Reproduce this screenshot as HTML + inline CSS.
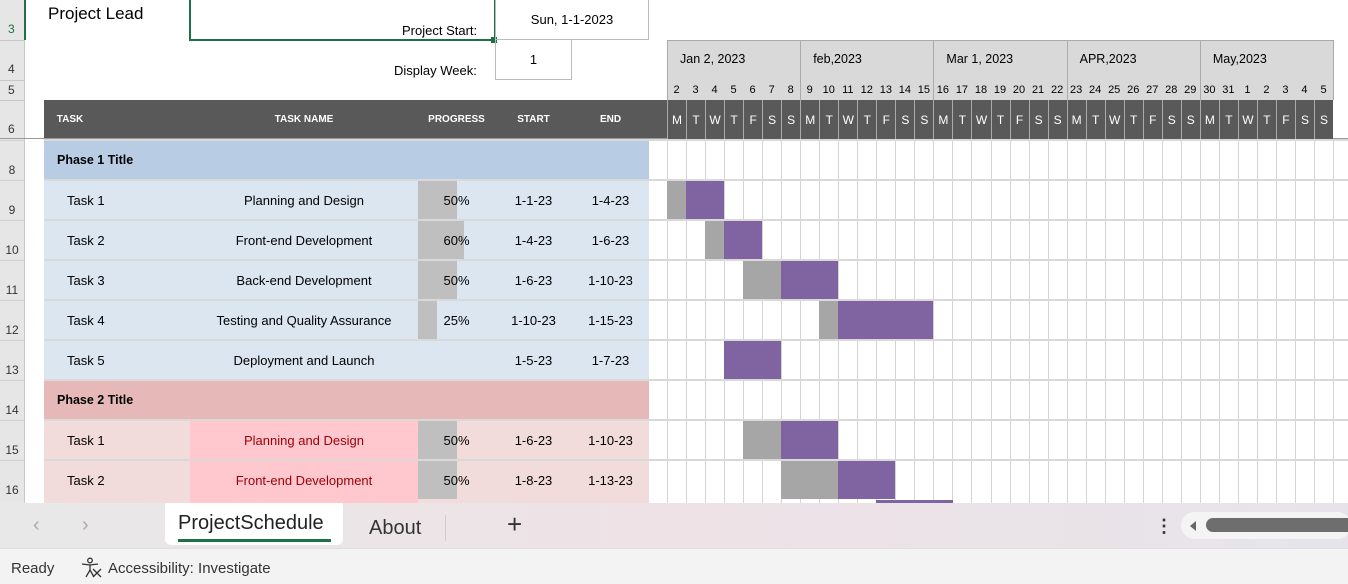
<!DOCTYPE html>
<html><head><style>
*{margin:0;padding:0;box-sizing:border-box}
body{width:1348px;height:584px;overflow:hidden;background:#fff;font-family:"Liberation Sans",Calibri,sans-serif;position:relative;font-size:13px;color:#000}
.a{position:absolute}
.rh{position:absolute;left:0;width:25px;background:#e6e6e6;border-right:1px solid #c8c8c8;color:#333;font-size:12px;text-align:center}
.c{position:absolute;display:flex;align-items:center;justify-content:center;white-space:nowrap}
</style></head><body>
<div class="rh" style="top:0;height:503px"></div>
<div class="a" style="left:0;top:40px;width:25px;height:1px;background:#c8c8c8"></div>
<div class="a" style="left:0;top:80px;width:25px;height:1px;background:#c8c8c8"></div>
<div class="a" style="left:0;top:100px;width:25px;height:1px;background:#c8c8c8"></div>
<div class="a" style="left:24px;top:0;width:2px;height:40px;background:#1e7145"></div>
<div class="a" style="left:8px;top:22px;font-size:12px;color:#1e7145">3</div>
<div class="a" style="left:8px;top:62px;font-size:12px;color:#333">4</div>
<div class="a" style="left:8px;top:83px;font-size:12px;color:#333">5</div>
<div class="a" style="left:8px;top:122px;font-size:12px;color:#333">6</div>

<div class="a" style="left:48px;top:4px;font-size:17px">Project Lead</div>
<div class="a" style="left:189px;top:-2px;width:307px;height:43px;border:2px solid #1e7145"></div>
<div class="a" style="left:491px;top:37px;width:6px;height:6px;background:#1e7145"></div>
<div class="a" style="left:402px;top:23px;font-size:13px">Project Start:</div>
<div class="c" style="left:495px;top:0;width:154px;height:40px;border:1px solid #bbb;border-top:none;font-size:13px">Sun, 1-1-2023</div>
<div class="a" style="left:394px;top:63px;font-size:13px">Display Week:</div>
<div class="c" style="left:495px;top:40px;width:77px;height:40px;border:1px solid #bbb;border-top:none">1</div>

<div class="a" style="left:44px;top:100px;width:624px;height:39px;background:#595959"></div>
<div class="c" style="left:44px;top:100px;width:52px;height:39px;color:#fff;font-weight:bold;font-size:10px">TASK</div>
<div class="c" style="left:190px;top:100px;width:228px;height:39px;color:#fff;font-weight:bold;font-size:10px">TASK NAME</div>
<div class="c" style="left:418px;top:100px;width:77px;height:39px;color:#fff;font-weight:bold;font-size:10px">PROGRESS</div>
<div class="c" style="left:495px;top:100px;width:77px;height:39px;color:#fff;font-weight:bold;font-size:10px">START</div>
<div class="c" style="left:572px;top:100px;width:77px;height:39px;color:#fff;font-weight:bold;font-size:10px">END</div>
<div class="a" style="left:0;top:138px;width:1348px;height:1px;background:#999"></div>

<div id="g"></div>
<script>
var h='';
var x0=667,w=19.03;
h+='<div class="a" style="left:667px;top:40px;width:666px;height:60px;background:#d9d9d9;border-top:1px solid #aaa"></div>';
h+='<div class="a" style="left:667px;top:100px;width:666px;height:39px;background:#595959"></div>';
var months=['Jan 2, 2023','feb,2023','Mar 1, 2023','APR,2023','May,2023'];
var days=[2,3,4,5,6,7,8,9,10,11,12,13,14,15,16,17,18,19,20,21,22,23,24,25,26,27,28,29,30,31,1,2,3,4,5];
var dn='MTWTFSS';
for(var m=0;m<5;m++){var l=x0+m*7*w;h+='<div class="a" style="left:'+(l)+'px;top:40px;width:1px;height:60px;background:#aaa"></div><div class="a" style="left:'+(l+13)+'px;top:52px;font-size:12.5px">'+months[m]+'</div>';}
h+='<div class="a" style="left:1333px;top:40px;width:1px;height:60px;background:#aaa"></div>';
for(var i=0;i<35;i++){var l=x0+i*w;
h+='<div class="c" style="left:'+l+'px;top:82px;width:'+w+'px;height:16px;font-size:11px">'+days[i]+'</div>';
h+='<div class="c" style="left:'+l+'px;top:100px;width:'+w+'px;height:39px;color:#fff;font-size:12px;border-left:1px solid #aaa">'+dn[i%7]+'</div>';
h+='<div class="a" style="left:'+l+'px;top:139px;width:1px;height:364px;background:#d4d4d4"></div>';}
h+='<div class="a" style="left:1333px;top:139px;width:1px;height:364px;background:#d4d4d4"></div>';
var rows=[
['Phase 1 Title','', '', '', '', 'p1'],
['Task 1','Planning and Design',50,'1-1-23','1-4-23','b'],
['Task 2','Front-end Development',60,'1-4-23','1-6-23','b'],
['Task 3','Back-end Development',50,'1-6-23','1-10-23','b'],
['Task 4','Testing and Quality Assurance',25,'1-10-23','1-15-23','b'],
['Task 5','Deployment and Launch','','1-5-23','1-7-23','b'],
['Phase 2 Title','','','','','p2'],
['Task 1','Planning and Design',50,'1-6-23','1-10-23','r'],
['Task 2','Front-end Development',50,'1-8-23','1-13-23','r']];
var bars=[null,[0,1,1,3],[2,3,3,5],[4,6,6,9],[8,9,9,14],[3,3,3,6],null,[4,6,6,9],[6,9,9,12]];
for(var r=0;r<9;r++){var t=140+r*40,R=rows[r];
h+='<div class="rh" style="top:'+t+'px;height:40px;border-top:1px solid #d0d0d0;padding-top:22px">'+(r+8)+'</div>';
h+='<div class="a" style="left:44px;top:'+(t-1)+'px;width:1304px;height:2px;background:#d9d9d9"></div>';
var bg=R[5]=='p1'?'#b8cce4':R[5]=='p2'?'#e6b8b7':R[5]=='b'?'#dce6f1':'#f2dcdb';
h+='<div class="a" style="left:44px;top:'+(t+1)+'px;width:605px;height:39px;background:'+bg+'"></div>';
if(R[5][0]=='p'){h+='<div class="c" style="left:57px;top:'+t+'px;height:40px;font-weight:bold;font-size:12.5px">'+R[0]+'</div>';continue;}
var red=R[5]=='r';
if(red)h+='<div class="a" style="left:190px;top:'+(t+1)+'px;width:228px;height:39px;background:#ffc7ce"></div>';
if(R[2]!=='')h+='<div class="a" style="left:418px;top:'+(t+1)+'px;width:'+(R[2]*0.77)+'px;height:38px;background:#bfbfbf"></div>';
h+='<div class="c" style="left:67px;top:'+t+'px;height:40px">'+R[0]+'</div>';
h+='<div class="c" style="left:190px;top:'+t+'px;width:228px;height:40px;'+(red?'color:#9c0006':'')+'">'+R[1]+'</div>';
h+='<div class="c" style="left:418px;top:'+t+'px;width:77px;height:40px">'+(R[2]!==''?R[2]+'%':'')+'</div>';
h+='<div class="c" style="left:495px;top:'+t+'px;width:77px;height:40px">'+R[3]+'</div>';
h+='<div class="c" style="left:572px;top:'+t+'px;width:77px;height:40px">'+R[4]+'</div>';
var b=bars[r];
if(b[1]>b[0])h+='<div class="a" style="left:'+(x0+b[0]*w)+'px;top:'+(t+1)+'px;width:'+((b[1]-b[0])*w)+'px;height:38px;background:#a6a6a6"></div>';
h+='<div class="a" style="left:'+(x0+b[2]*w)+'px;top:'+(t+1)+'px;width:'+((b[3]-b[2])*w)+'px;height:38px;background:#8064a2"></div>';}
h+='<div class="a" style="left:44px;top:500px;width:605px;height:3px;background:#f2dcdb"></div><div class="a" style="left:190px;top:500px;width:228px;height:3px;background:#ffc7ce"></div><div class="a" style="left:876px;top:500px;width:77px;height:3px;background:#8064a2"></div>';
document.getElementById('g').innerHTML=h;
</script>

<div class="a" style="left:0;top:503px;width:1348px;height:45px;background:linear-gradient(90deg,#e8e8e8,#eee2e6 50%,#e6e4ea)"></div>
<div class="a" style="left:33px;top:514px;font-size:20px;color:#aaa">‹</div>
<div class="a" style="left:82px;top:514px;font-size:20px;color:#aaa">›</div>
<div class="a" style="left:165px;top:503px;width:178px;height:42px;background:#fff;border-radius:0 0 6px 6px"></div>
<div class="a" style="left:178px;top:512px;font-size:20px;color:#222">ProjectSchedule</div>
<div class="a" style="left:178px;top:539px;width:153px;height:3px;background:#1e7145"></div>
<div class="a" style="left:369px;top:517px;font-size:20px;color:#333">About</div>
<div class="a" style="left:445px;top:515px;width:1px;height:26px;background:#ccc"></div>
<div class="a" style="left:507px;top:509px;font-size:26px;color:#333;font-weight:300">+</div>
<div class="a" style="left:1155px;top:516px;font-size:18px;color:#333;font-weight:bold">⋮</div>
<div class="a" style="left:1181px;top:512px;width:170px;height:27px;background:#f4f4f4;border-radius:14px"></div>
<div class="a" style="left:1190px;top:521px;width:0;height:0;border-top:5px solid transparent;border-bottom:5px solid transparent;border-right:6px solid #666"></div>
<div class="a" style="left:1206px;top:518px;width:150px;height:14px;background:#6e6e6e;border-radius:7px"></div>
<div class="a" style="left:0;top:548px;width:1348px;height:36px;background:#f3f3f3;border-top:1px solid #e0e0e0"></div>
<div class="a" style="left:11px;top:560px;font-size:15px;color:#333">Ready</div>
<svg class="a" style="left:80px;top:557px" width="24" height="22" viewBox="0 0 24 22" fill="none" stroke="#333" stroke-width="1.3"><circle cx="10" cy="3.5" r="2.3"/><path d="M2 7 L10 8 L18 7 M10 8 L10 13 L6 20 M10 13 L14 20 M13 12 L21 20 M21 12 L13 20"/></svg>
<div class="a" style="left:108px;top:560px;font-size:15px;color:#333">Accessibility: Investigate</div>
</body></html>
